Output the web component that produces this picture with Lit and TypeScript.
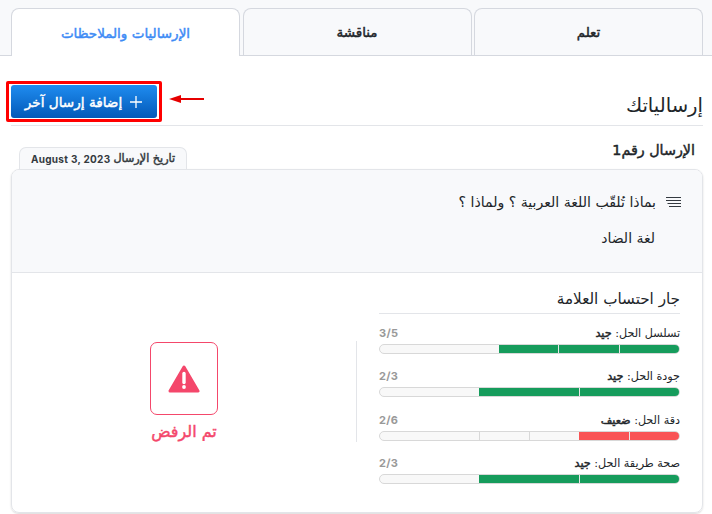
import { LitElement, html, css } from "lit";
import { customElement } from "lit/decorators.js";

type Row = { label: string; grade: string; score: string; total: number; filled: number; color: string };
const rows: Row[] = [
  { label: "تسلسل الحل:", grade: "جيد", score: "3/5", total: 5, filled: 3, color: "green" },
  { label: "جودة الحل:", grade: "جيد", score: "2/3", total: 3, filled: 2, color: "green" },
  { label: "دقة الحل:", grade: "ضعيف", score: "2/6", total: 6, filled: 2, color: "red" },
  { label: "صحة طريقة الحل:", grade: "جيد", score: "2/3", total: 3, filled: 2, color: "green" },
];

@customElement("app-root")
export class AppRoot extends LitElement {
  static styles = css`
    :host { display: block; width: 712px; height: 514px; overflow: hidden; background: #fff; font-family: "DejaVu Sans", sans-serif; color: #212529; position: relative; }
    * { box-sizing: border-box; }
    .root { direction: rtl; }
    .fb { font-weight: 400; -webkit-text-stroke: 0.45px currentColor; }
    .tabs { height: 56px; background: #f8f9fb; border-bottom: 1px solid #d5d8df; padding: 8px 9px 0 11px; display: flex; gap: 2.5px; }
    .tab { flex: 1; height: 47px; border: 1px solid #d5d8df; border-bottom: 0; border-radius: 8px 8px 0 0; display: flex; align-items: center; justify-content: center; font-size: 13.5px; color: #212529; }
    .tab.active { background: #fff; color: #3d8bf5; height: 48px; }
    .main { padding: 0 9px 0 11px; }
    .head { height: 70px; display: flex; align-items: flex-end; justify-content: space-between; border-bottom: 1px solid #e3e5e9; padding-bottom: 5px; }
    .head h2 { margin: 0; font-size: 19.6px; font-weight: 400; line-height: 28px; color: #212529; }
    .redbox { border: 3px solid #f00; border-radius: 2px; padding: 1px 2px; margin: 0 0 -2px -5px; display: flex; }
    .btn { width: 146px; height: 33px; border-radius: 3px; background: linear-gradient(180deg, #1f8cf0, #0359b8); color: #fff; font-size: 13.6px; display: flex; align-items: center; justify-content: center; gap: 7px; }
    .arrow { position: absolute; left: 169px; top: 94px; }
    .sub { display: flex; justify-content: space-between; align-items: flex-end; height: 43px; padding: 0 8px; }
    .sub b { font-size: 14.3px; line-height: 20px; position: relative; top: -9px; }
    .date { height: 22px; width: 168px; background: #f8f9fb; border: 1px solid #e3e5e9; border-bottom: 0; border-radius: 7px 7px 0 0; font-size: 11.2px; display: flex; align-items: center; justify-content: center; gap: 3px; color: #343a40; }
    .latin { font-family: Inter, sans-serif; font-weight: 700; font-size: 10px; letter-spacing: 0.3px; -webkit-text-stroke: 0; }
    .card { height: 344px; border: 1px solid #e3e5e9; border-radius: 8px; overflow: hidden; box-shadow: 0 1px 2px rgba(0,0,0,.15); }
    .q { height: 103px; background: #f8f9fb; border-bottom: 1px solid #e3e5e9; padding: 22px 21px 0 0; }
    .qline { display: flex; align-items: center; gap: 10px; font-size: 14.1px; line-height: 20px; height: 20px; }
    .ans { font-size: 14px; line-height: 20px; margin: 16px 26px 0 0; }
    .body { display: flex; padding: 0 22px 0 0; }
    .marks { width: 301px; flex: none; }
    .marks h3 { margin: 0; height: 41px; border-bottom: 1px solid #e3e5e9; font-size: 15.2px; font-weight: 400; line-height: 20px; padding-top: 16px; }
    .row { height: 43.3px; }
    .rowtop { display: flex; justify-content: space-between; align-items: center; padding-top: 10px; font-size: 11.2px; height: 30px; line-height: 20px; }
    .score { direction: ltr; font-family: Inter, sans-serif; font-size: 11px; font-weight: 700; color: #999; letter-spacing: 0.3px; position: relative; top: -1px; }
    .bar { height: 10px; border: 1px solid #d8d8d8; border-radius: 5px; display: flex; overflow: hidden; background: #f8f8f8; }
    .seg { flex: 1; border-left: 1px solid #d8d8d8; }
    .seg.plain { border-left: 0; }
    .seg.green { background: #169c5c; border-left-color: #e8e8e8; }
    .seg.red { background: #f95355; border-left-color: #e8e8e8; }
    .side { flex: 1; display: flex; }
    .vr { width: 1px; height: 101px; background: #e3e5e9; margin: 68px 22px 0 0; }
    .status { flex: 1; padding: 69px 0 0 0; display: flex; flex-direction: column; align-items: center; }
    .sbox { width: 68px; height: 73px; border: 1px solid #f4476b; border-radius: 7px; display: flex; align-items: center; justify-content: center; }
    .stext { color: #f4476b; font-size: 16px; margin-top: 6px; line-height: 22px; }
  `;

  render() {
    return html`<div class="root">
      <div class="tabs">
        <div class="tab fb">تعلم</div>
        <div class="tab fb">مناقشة</div>
        <div class="tab active fb">الإرساليات والملاحظات</div>
      </div>
      <div class="main">
        <div class="head">
          <h2>إرسالياتك</h2>
          <div class="redbox"><div class="btn">
            <svg width="14" height="14" viewBox="0 0 14 14"><path d="M7 1v12M1 7h12" stroke="#fff" stroke-width="1.3" fill="none"/></svg>
            <span class="fb">إضافة إرسال آخر</span>
          </div></div>
        </div>
        <div class="sub">
          <b class="fb">الإرسال رقم1</b>
          <div class="date"><span class="fb">تاريخ الإرسال</span><span class="latin" dir="ltr">August 3, 2023</span></div>
        </div>
        <div class="card">
          <div class="q">
            <div class="qline">
              <svg width="15" height="12" viewBox="0 0 15 12"><path d="M0 1.5h15M0 4.5h15M1.5 7.5h13.5M3 10.5h12" stroke="#343a40" stroke-width="1" fill="none"/></svg>
              <span>بماذا تُلقّب اللغة العربية ؟ ولماذا ؟</span>
            </div>
            <div class="ans">لغة الضاد</div>
          </div>
          <div class="body">
            <div class="marks">
              <h3>جار احتساب العلامة</h3>
              ${rows.map((r) => html`<div class="row">
                <div class="rowtop"><span>${r.label} <span class="fb">${r.grade}</span></span><span class="score">${r.score}</span></div>
                <div class="bar">${Array.from({ length: r.total }, (_, i) => {
                  const noLine = i === r.total - 2 || i === r.filled - 1 || i === r.total - 1;
                  return html`<div class="seg ${i < r.filled ? r.color : ""} ${noLine ? "plain" : ""}"></div>`;
                })}</div>
              </div>`)}
            </div>
            <div class="side">
              <div class="vr"></div>
              <div class="status">
                <div class="sbox">
                  <svg width="32" height="28" viewBox="0 0 32 28"><path d="M16 2 30 26H2Z" fill="#f4476b" stroke="#f4476b" stroke-width="3" stroke-linejoin="round"/><path d="M16 8.5v9" stroke="#fff" stroke-width="3.4" stroke-linecap="round"/><circle cx="16" cy="22" r="1.9" fill="#fff"/></svg>
                </div>
                <div class="stext fb">تم الرفض</div>
              </div>
            </div>
          </div>
        </div>
      </div>
      <svg class="arrow" width="36" height="10" viewBox="0 0 36 10"><path d="M0 5 12 1v3h23v2H12v3Z" fill="#e60000"/></svg>
    </div>`;
  }
}
